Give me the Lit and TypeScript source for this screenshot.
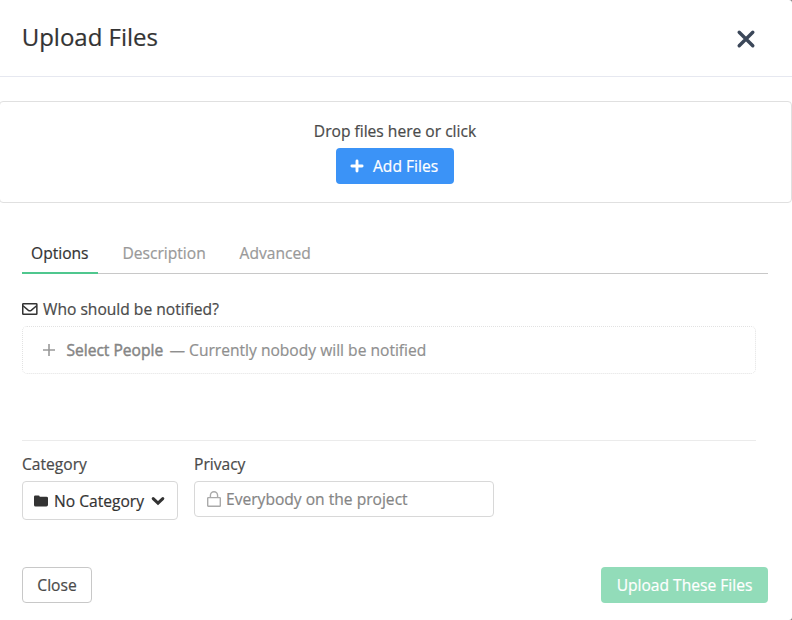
import { LitElement, html, css, svg } from "lit";
import { customElement, state } from "lit/decorators.js";
import { classMap } from "lit/directives/class-map.js";

const icon = (name: string, box: string, body: unknown) =>
  html`<svg class="icon ${name}" viewBox=${box} fill="none" stroke="currentColor">${body}</svg>`;

const closeIcon = icon("close", "0 0 20 20", svg`<path d="M3.2 3.2 16.8 16.8M16.8 3.2 3.2 16.8" stroke-width="3.4" stroke-linecap="round"/>`);
const plusBold = icon("plus-bold", "0 0 14 14", svg`<path d="M7 1.9v10.2M1.9 7h10.2" stroke-width="2.9" stroke-linecap="round"/>`);
const plusThin = icon("plus-thin", "0 0 14 14", svg`<path d="M7 1v12M1 7h12" stroke-width="1.6"/>`);
const mail = icon("mail", "0 0 16 12", svg`<rect x=".75" y=".75" width="14.1" height="10.5" rx=".6" stroke-width="1.5"/><path d="m1 2.7 5.4 4.6q1.4 1 2.8 0l5.4-4.6" stroke-width="1.5"/>`);
const folder = icon("folder", "0 0 14 12", svg`<path d="M0 1.8Q0 .5 1.3.5h3.2q1.2 0 1.2 1.3h6.7Q14 1.8 14 3.1v6.6q0 1.8-1.6 1.8H1.6Q0 11.5 0 9.9Z" fill="currentColor" stroke="none"/>`);
const chevron = icon("chevron", "0 0 14 10", svg`<path d="m2.2 2.6 4.8 4.6 4.8-4.6" stroke-width="3" stroke-linecap="round"/>`);
const lock = icon("lock", "0 0 14 16", svg`<rect x=".7" y="6.6" width="12.6" height="8.7" rx=".6" stroke-width="1.4"/><path d="M3.4 6.5V4.4a3.6 3.6 0 0 1 7.2 0v2.1" stroke-width="1.4"/>`);

const TABS = ["Options", "Description", "Advanced"];

@customElement("app-root")
export class AppRoot extends LitElement {
  @state() private tab = "Options";

  static styles = css`
    :host {
      display: block;
      height: 620px;
      background: #808080;
      overflow: hidden;
      font: 15.6px/22px "Open Sans", sans-serif;
      -webkit-text-stroke: 0.2px currentColor;
      color: #4a4a4a;
    }
    * { box-sizing: border-box; }
    .dialog {
      display: flex;
      flex-direction: column;
      height: 100%;
      background: #fff;
      border-radius: 0 3px 3px 0;
    }
    button { font: inherit; color: inherit; background: none; border: 0; padding: 0; margin: 0; white-space: nowrap; }
    .icon { display: block; flex: none; }
    .header {
      display: flex;
      align-items: center;
      justify-content: space-between;
      height: 77px;
      padding: 0 36px 0 21.7px;
      border-bottom: 1px solid #e6e8f0;
    }
    h1 { margin: 0; padding-bottom: 2px; font-size: 24px; line-height: 34px; font-weight: 400; color: #333; }
    .dismiss { padding-top: 1px; color: #3b4759; }
    .close { width: 20px; height: 20px; }
    .drop {
      display: flex;
      flex-direction: column;
      align-items: center;
      height: 102px;
      margin: 24px 0 0 -1px;
      padding: 18px 1px 0 0;
      border: 1px solid #e0e0e0;
      border-radius: 4px;
    }
    .add {
      display: flex;
      align-items: center;
      gap: 9px;
      width: 118px;
      height: 36px;
      margin-top: 6px;
      padding-left: 14px;
      border-radius: 4px;
      background: #3b93f7;
      color: #fff;
    }
    .plus-bold { width: 14px; height: 14px; }
    .tabs {
      display: flex;
      height: 39px;
      margin: 32px 24px 0 22px;
      border-bottom: 1px solid #c8c8c8;
    }
    .tab { height: 39px; padding: 0 9px 2px; margin-right: 15.9px; border-bottom: 2px solid transparent; color: #999; }
    .tab.active { border-color: #4fc78e; color: #333; }
    .people-label { display: flex; align-items: center; gap: 5px; height: 22px; margin: 24px 0 0 22px; }
    .mail { width: 16px; height: 12px; color: #333; }
    .people {
      display: flex;
      align-items: center;
      height: 48px;
      margin: 6px 36px 0 22px;
      padding-left: 19px;
      border: 1px dotted #e2e2e2;
      border-radius: 5px;
      color: #8f8f8f;
    }
    .plus-thin { width: 14px; height: 14px; margin-right: 10.4px; color: #999; }
    .people b { font-weight: 400; -webkit-text-stroke-width: 0.45px; color: #858585; margin-right: 6.2px; }
    .fields { display: flex; gap: 16px; margin: 66px 36px 0 22px; padding-top: 12px; border-top: 1px solid #ebebeb; }
    .field { display: flex; flex-direction: column; gap: 6px; }
    .control { display: flex; align-items: center; border: 1px solid #d8d8d8; border-radius: 4px; }
    .category { width: 156px; height: 39px; padding-left: 11px; color: #333; }
    .folder { width: 14px; height: 12px; margin-right: 6px; }
    .chevron { width: 14px; height: 10px; margin: 1px 0 0 6.6px; }
    .privacy { width: 300px; height: 36px; padding-left: 12px; color: #858585; }
    .lock { width: 14px; height: 16px; margin-right: 5px; color: #aaa; }
    .footer { display: flex; justify-content: space-between; margin: 47px 24px 0 22px; }
    .footer button { height: 36px; border-radius: 4px; }
    .cancel { width: 70px; border: 1px solid #c8c8c8; }
    .submit { width: 167px; background: #92dcb9; color: #fff; }
  `;

  render() {
    return html`<div class="dialog">
      <header class="header">
        <h1>Upload Files</h1>
        <button class="dismiss" aria-label="Close dialog">${closeIcon}</button>
      </header>
      <section class="drop">
        <span>Drop files here or click</span>
        <button class="add">${plusBold}<span>Add Files</span></button>
      </section>
      <nav class="tabs">
        ${TABS.map((t) => html`<button class=${classMap({ tab: true, active: t === this.tab })} @click=${() => (this.tab = t)}>${t}</button>`)}
      </nav>
      <div class="people-label">${mail}<span>Who should be notified?</span></div>
      <div class="people">${plusThin}<b>Select People</b><span>— Currently nobody will be notified</span></div>
      <div class="fields">
        <div class="field">
          <span>Category</span>
          <button class="control category">${folder}<span>No Category</span>${chevron}</button>
        </div>
        <div class="field">
          <span>Privacy</span>
          <div class="control privacy">${lock}<span>Everybody on the project</span></div>
        </div>
      </div>
      <footer class="footer">
        <button class="cancel">Close</button>
        <button class="submit">Upload These Files</button>
      </footer>
    </div>`;
  }
}
